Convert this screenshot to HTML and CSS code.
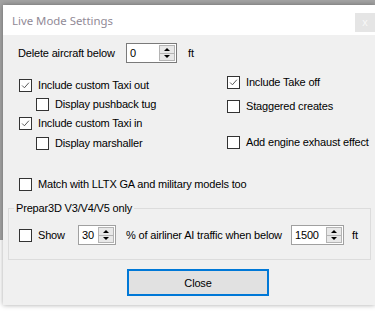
FILE: index.html
```html
<!DOCTYPE html>
<html>
<head>
<meta charset="utf-8">
<link rel="stylesheet" href="styles.css">
</head>
<body>
<div class="screen">
  <div class="dialog">
    <div class="titlebar">
      <span class="title">Live Mode Settings</span>
      <span class="close">x</span>
    </div>
    <div class="content">
      <div class="row-delete">
        <span class="lbl-delete">Delete aircraft below</span>
        <div class="spin spin-delete">
          <span class="val">0</span>
          <span class="arrows"><span class="arr up"></span><span class="arr down"></span></span>
        </div>
        <span class="unit-delete">ft</span>
      </div>
      <div class="cols">
        <div class="col col-left">
          <div class="cb l1"><span class="box checked"><svg viewBox="0 0 13 13"><path d="M2.5 6.5 L5.2 9.2 L10.5 3.2" fill="none" stroke="#4d4d4d" stroke-width="1.1"/></svg></span><span class="txt">Include custom Taxi out</span></div>
          <div class="cb l2 sub"><span class="box"></span><span class="txt">Display pushback tug</span></div>
          <div class="cb l3"><span class="box checked"><svg viewBox="0 0 13 13"><path d="M2.5 6.5 L5.2 9.2 L10.5 3.2" fill="none" stroke="#4d4d4d" stroke-width="1.1"/></svg></span><span class="txt">Include custom Taxi in</span></div>
          <div class="cb l4 sub"><span class="box"></span><span class="txt">Display marshaller</span></div>
        </div>
        <div class="col col-right">
          <div class="cb r1"><span class="box checked"><svg viewBox="0 0 13 13"><path d="M2.5 6.5 L5.2 9.2 L10.5 3.2" fill="none" stroke="#4d4d4d" stroke-width="1.1"/></svg></span><span class="txt">Include Take off</span></div>
          <div class="cb r2"><span class="box"></span><span class="txt">Staggered creates</span></div>
          <div class="cb r3"><span class="box"></span><span class="txt">Add engine exhaust effect</span></div>
        </div>
      </div>
      <div class="cb match"><span class="box"></span><span class="txt">Match with LLTX GA and military models too</span></div>
      <fieldset class="group">
        <legend>Prepar3D V3/V4/V5 only</legend>
        <div class="row-show">
          <div class="cb"><span class="box"></span><span class="txt show-txt">Show</span></div>
          <div class="spin spin-pct">
            <span class="val">30</span>
            <span class="arrows"><span class="arr up"></span><span class="arr down"></span></span>
          </div>
          <span class="lbl-pct">% of airliner AI traffic when below</span>
          <div class="spin spin-alt">
            <span class="val">1500</span>
            <span class="arrows"><span class="arr up"></span><span class="arr down"></span></span>
          </div>
          <span class="unit-alt">ft</span>
        </div>
      </fieldset>
      <div class="actions">
        <button class="btn-close">Close</button>
      </div>
    </div>
  </div>
</div>
</body>
</html>
```
FILE: styles.css
```css
html, body {
  margin: 0;
  padding: 0;
}
body {
  width: 375px;
  height: 312px;
  overflow: hidden;
  background: linear-gradient(to bottom, #a3a3a3 0, #a3a3a3 240px, #ffffff 240px);
  font-family: "Liberation Sans", Arial, sans-serif;
  font-size: 11px;
  letter-spacing: -0.17px;
  color: #000;
}
.screen {
  padding: 5px 0 0 3px;
}
.dialog {
  width: 372px;
  height: 300px;
  background: #f0f0f0;
  box-shadow: 0 0 5px rgba(0, 0, 0, 0.35);
  display: flex;
  flex-direction: column;
}
.titlebar {
  height: 30px;
  background: #fff;
  display: flex;
  align-items: flex-start;
}
.title {
  font-family: "Noto Sans", "Open Sans", sans-serif;
  font-size: 11.4px;
  letter-spacing: 0;
  line-height: 16px;
  color: #918a96;
  padding: 8px 0 0 9px;
}
.close {
  margin-left: auto;
  margin-top: 8px;
  width: 20px;
  height: 19px;
  background: #e5e5e5;
  color: #f8f8f8;
  font-family: "Liberation Sans", Arial, sans-serif;
  font-size: 11px;
  line-height: 18px;
  text-align: center;
}
.content {
  display: flex;
  flex-direction: column;
}
.row-delete {
  margin-top: 8px;
  height: 20px;
  display: flex;
  align-items: center;
  padding-left: 15px;
}
.lbl-delete {
  width: 108px;
}
.unit-delete {
  margin-left: 11px;
}
.spin {
  box-sizing: border-box;
  height: 20px;
  background: #fff;
  border: 1px solid #a0a0a0;
  display: flex;
  align-items: stretch;
}
.spin-delete {
  width: 51px;
  border-color: #7a7a7a;
}
.spin-pct {
  width: 38px;
}
.spin-alt {
  width: 53px;
}
.val {
  flex: 1;
  padding-left: 3px;
  line-height: 18px;
}
.arrows {
  width: 16px;
  display: flex;
  flex-direction: column;
  margin: 1px;
}
.arr {
  flex: 1;
  background: #e8e8e8;
  border: 1px solid #b4b4b4;
  display: flex;
  align-items: center;
  justify-content: center;
}
.arr.down {
  border-top: none;
}
.arr::before {
  content: "";
  width: 0;
  height: 0;
  border-left: 3px solid transparent;
  border-right: 3px solid transparent;
}
.arr.up::before {
  border-bottom: 3px solid #000;
}
.arr.down::before {
  border-top: 3px solid #000;
}
.cols {
  display: flex;
  align-items: flex-start;
  padding-left: 16px;
}
.col {
  display: flex;
  flex-direction: column;
}
.col-left {
  width: 208px;
}
.cb {
  display: flex;
  align-items: center;
  height: 13px;
}
.box {
  box-sizing: border-box;
  width: 13px;
  height: 13px;
  border: 1px solid #333;
  background: #fff;
  flex: none;
  display: block;
}
.box svg {
  display: block;
  width: 11px;
  height: 11px;
}
.txt {
  margin-left: 6px;
  line-height: 13px;
  white-space: nowrap;
}
.sub {
  margin-left: 17px;
}
.l1 { margin-top: 16px; }
.l2 { margin-top: 6px; }
.l3 { margin-top: 6px; }
.l4 { margin-top: 7px; }
.r1 { margin-top: 13px; }
.r2 { margin-top: 11px; }
.r3 { margin-top: 23px; }
.match {
  margin-top: 28px;
  margin-left: 16px;
}
.group {
  box-sizing: border-box;
  margin: 11px 0 0 5px;
  width: 363px;
  padding: 10px 0 14px 10px;
  border: 1px solid #dcdcdc;
  min-inline-size: 0;
}
.group legend {
  padding: 0 2px;
  margin-left: -5px;
  line-height: 13px;
  font-size: 11px;
}
.row-show {
  display: flex;
  align-items: center;
  height: 20px;
}
.show-txt {
  width: 40px;
}
.lbl-pct {
  margin-left: 10px;
  width: 165px;
  white-space: nowrap;
}
.unit-alt {
  margin-left: 8px;
}
.actions {
  display: flex;
  padding-left: 124px;
  margin-top: 9px;
}
.btn-close {
  box-sizing: border-box;
  width: 142px;
  height: 27px;
  border: 2px solid #0078d7;
  background: #e1e1e1;
  font-family: "Liberation Sans", Arial, sans-serif;
  font-size: 11px;
  letter-spacing: -0.17px;
  color: #000;
  padding: 0;
}
```
